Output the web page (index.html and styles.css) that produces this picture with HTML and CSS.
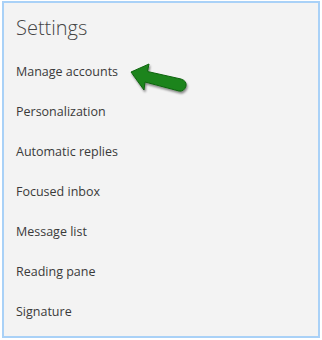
FILE: index.html
```html
<!DOCTYPE html>
<html lang="en">
<head>
    <meta charset="UTF-8">
    <meta name="viewport" content="width=device-width, initial-scale=1.0">
    <title>Settings</title>
    <link rel="stylesheet" href="styles.css">
</head>
<body>
    <div class="panel">
        <h1>Settings</h1>
        <ul class="menu">
            <li class="item">Manage accounts</li>
            <li class="item">Personalization</li>
            <li class="item">Automatic replies</li>
            <li class="item">Focused inbox</li>
            <li class="item">Message list</li>
            <li class="item">Reading pane</li>
            <li class="item">Signature</li>
        </ul>
        <svg class="arrow" width="70" height="40" viewBox="0 0 70 40">
            <defs>
                <filter id="shadow" x="-20%" y="-20%" width="140%" height="160%">
                    <feDropShadow dx="1" dy="2" stdDeviation="1.2" flood-color="#000" flood-opacity="0.45"/>
                </filter>
            </defs>
            <path d="M7 11 L25 3 L23.5 10.5 L57 18 Q63 20 62 25 Q60 31 55 30 L21 21 L20 29 Z"
                  fill="#1c841c" stroke="#116411" stroke-width="1" stroke-linejoin="round" filter="url(#shadow)"/>
        </svg>
    </div>
</body>
</html>
```

FILE: styles.css
```css
body {
    margin: 0;
    background-color: #fff;
    font-family: "Open Sans", "Noto Sans", sans-serif;
}
.panel {
    position: relative;
    box-sizing: border-box;
    width: 318px;
    height: 337px;
    margin: 1px 0 0 2px;
    background-color: #f3f3f3;
    border: 2px solid #a9d1f7;
    padding: 11px 0 0 12px;
}
h1 {
    margin: 0;
    font-size: 20px;
    font-weight: 300;
    color: #444;
    line-height: 28px;
}
.menu {
    list-style: none;
    margin: 22px 0 0;
    padding: 0;
}
.item {
    height: 40px;
    line-height: 16px;
    font-size: 12.5px;
    color: #3a3a3a;
}
.arrow {
    position: absolute;
    left: 120px;
    top: 58px;
}
```
